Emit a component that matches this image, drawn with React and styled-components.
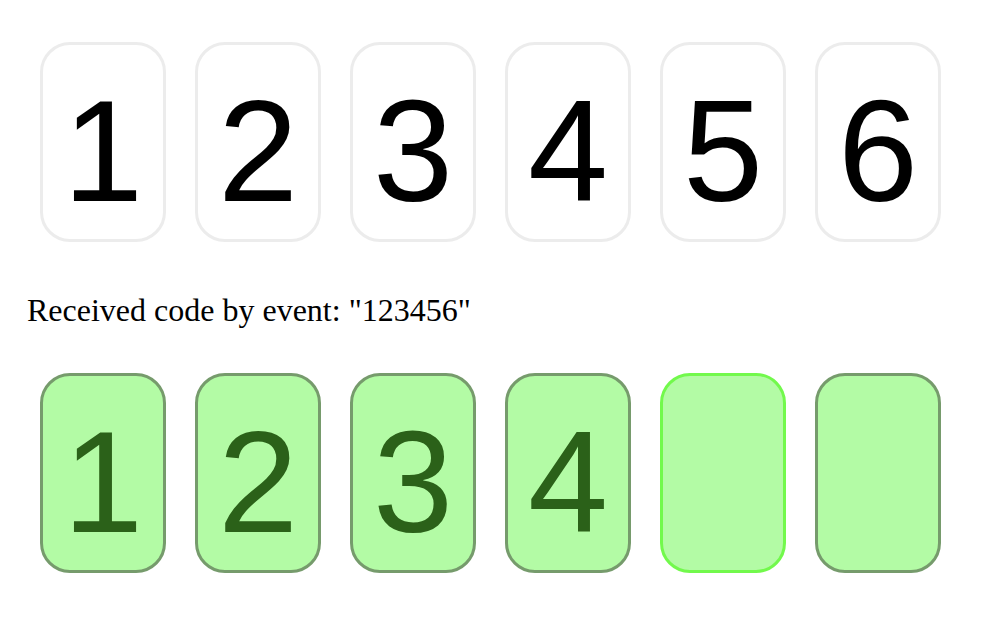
import React from "react"
import styled, { createGlobalStyle } from "styled-components"

const GlobalStyle = createGlobalStyle`
  body {
    margin: 0;
    background: #fff;
  }
`

const Page = styled.div`
  padding: 42px 0 0 40px;
  font-family: "Liberation Serif", "Times New Roman", serif;
`

const CodeRow = styled.div`
  display: flex;
  gap: 29px;
`

const colors = {
  idle: { bg: "#ffffff", border: "#ececec", text: "#000000" },
  filled: { bg: "#b3fba5", border: "#769b6c", text: "#2b6119" },
  focus: { bg: "#b3fba5", border: "#72f94c", text: "#2b6119" },
}

const Cell = styled.div`
  box-sizing: border-box;
  width: 126px;
  height: 200px;
  padding-top: 20px;
  display: flex;
  align-items: center;
  justify-content: center;
  border: 3px solid ${(props) => colors[props.variant].border};
  border-radius: 30px;
  background: ${(props) => colors[props.variant].bg};
  color: ${(props) => colors[props.variant].text};
  font-family: "Liberation Sans", Arial, sans-serif;
  font-size: 144px;
  line-height: normal;
`

const Message = styled.p`
  margin: 50px 0 45px -13px;
  font-size: 32px;
  line-height: 36px;
  color: #000;
`

const code = "123456"
const partial = ["1", "2", "3", "4", "", ""]

export default function App() {
  return (
    <Page>
      <GlobalStyle />
      <CodeRow>
        {code.split("").map((d, i) => (
          <Cell variant="idle" key={i}>
            {d}
          </Cell>
        ))}
      </CodeRow>
      <Message>Received code by event: "{code}"</Message>
      <CodeRow>
        {partial.map((d, i) => (
          <Cell variant={i === 4 ? "focus" : "filled"} key={i}>
            {d}
          </Cell>
        ))}
      </CodeRow>
    </Page>
  )
}
